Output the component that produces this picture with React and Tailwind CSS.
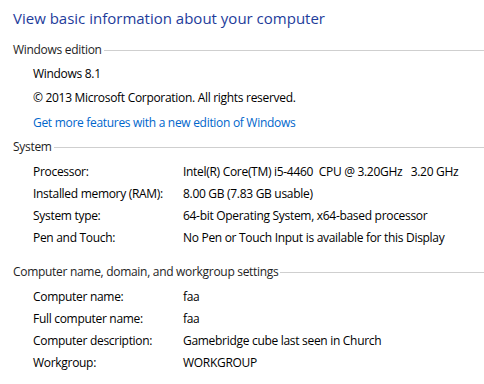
import React from "react";

const font = { fontFamily: '"Open Sans", "Noto Sans", Arial, sans-serif' };

const Section = ({ title, className = "" }) => (
    <div className={`flex items-center h-6 pl-[13px] text-[12px] text-[#1e1e1e] ${className}`}>
        <span className="whitespace-nowrap">{title}</span>
        <div className="flex-1 ml-[2px] border-t border-[#cfcfcf]" />
    </div>
);

const Row = ({ label, value }) => (
    <div className="flex items-center h-[22px] pl-[33px] text-[12px] text-black">
        <span className="w-[150px] shrink-0 whitespace-nowrap">{label}</span>
        <span className="whitespace-pre">{value}</span>
    </div>
);

export default function App() {
    return (
        <div className="w-[484px] h-[384px] bg-white overflow-hidden pt-2 tracking-[-0.3px]" style={font}>
            <div className="h-5 flex items-center pl-[13px] text-[15px] tracking-normal text-[#1e3c9b]">
                View basic information about your computer
            </div>

            <Section title="Windows edition" className="mt-[10px]" />
            <div className="text-[12px] text-black pl-[33px]">
                <div className="h-6 flex items-center">Windows 8.1</div>
                <div className="h-6 flex items-center">© 2013 Microsoft Corporation. All rights reserved.</div>
                <div className="h-[25px] flex items-center text-[#0066cc]">Get more features with a new edition of Windows</div>
            </div>

            <Section title="System" />
            <div className="mt-[2px]">
                <Row label="Processor:" value={"Intel(R) Core(TM) i5-4460  CPU @ 3.20GHz   3.20 GHz"} />
                <Row label="Installed memory (RAM):" value="8.00 GB (7.83 GB usable)" />
                <Row label="System type:" value="64-bit Operating System, x64-based processor" />
                <Row label="Pen and Touch:" value="No Pen or Touch Input is available for this Display" />
            </div>

            <Section title="Computer name, domain, and workgroup settings" className="mt-[11px]" />
            <div className="mt-[2px]">
                <Row label="Computer name:" value="faa" />
                <Row label="Full computer name:" value="faa" />
                <Row label="Computer description:" value="Gamebridge cube last seen in Church" />
                <Row label="Workgroup:" value="WORKGROUP" />
            </div>
        </div>
    );
}
